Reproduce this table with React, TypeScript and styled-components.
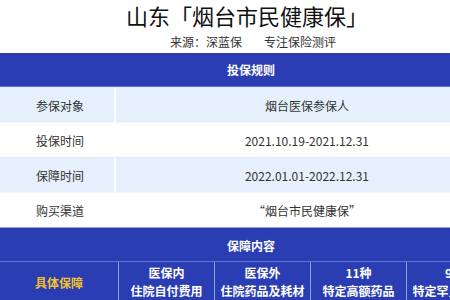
import React from 'react'
import styled, { createGlobalStyle } from 'styled-components'

const Global = createGlobalStyle`
  *, *::before, *::after {
    box-sizing: border-box;
  }
  html, body {
    margin: 0;
    padding: 0;
    background: #fff;
    overflow: hidden;
  }
  body {
    font-family: "Noto Sans CJK SC", "Noto Sans", sans-serif;
    color: #333;
  }
`

const rules = [
  { label: '参保对象', value: '烟台医保参保人' },
  { label: '投保时间', value: '2021.10.19-2021.12.31' },
  { label: '保障时间', value: '2022.01.01-2022.12.31' },
  { label: '购买渠道', value: '“烟台市民健康保”' },
]

const cover = [
  ['医保内', '住院自付费用'],
  ['医保外', '住院药品及耗材费用'],
  ['11种', '特定高额药品'],
  ['9种', '特定罕见病药品'],
]

export default function App() {
  return (
    <Page>
      <Global />
      <Title>山东「烟台市民健康保」</Title>
      <Sub>
        <span>来源：深蓝保</span>
        <span>专注保险测评</span>
      </Sub>
      <Section>
        <Head>投保规则</Head>
        {rules.map((r, i) => (
          <Row key={r.label} shaded={i % 2 === 0}>
            <Label>{r.label}</Label>
            <Value>{r.value}</Value>
          </Row>
        ))}
      </Section>
      <Section>
        <Head second>保障内容</Head>
        <CoverRow>
          <Gold>具体保障</Gold>
          {cover.map(([a, b]) => (
            <CoverCell key={a}>
              <div>{a}</div>
              <div>{b}</div>
            </CoverCell>
          ))}
        </CoverRow>
      </Section>
    </Page>
  )
}

const Page = styled.div`
  width: 502px;
`

const Title = styled.h1`
  margin: 0;
  font-size: 22px;
  font-weight: 400;
  line-height: 30px;
  text-align: center;
  color: #111;
  padding-right: 8px;
`

const Sub = styled.div`
  display: flex;
  justify-content: center;
  gap: 22px;
  margin: 2px 0 1px;
  font-size: 12px;
  line-height: 20px;
  color: #333;
  padding-left: 4px;
`

const Section = styled.div`
  display: flex;
  flex-direction: column;
`

const Head = styled.div<{ second?: boolean }>`
  height: ${(p) => (p.second ? '35px' : '34px')};
  line-height: ${(p) => (p.second ? '35px' : '34px')};
  background: #2a3db3;
  color: #fff;
  font-size: 12px;
  font-weight: 700;
  text-align: center;
  border-top: ${(p) => (p.second ? '1px solid #8fa2e6' : 'none')};
  border-bottom: 1px solid #5c74d6;
`

const Row = styled.div<{ shaded: boolean }>`
  display: grid;
  grid-template-columns: 116px 1fr;
  height: 35px;
  align-items: center;
  font-size: 12px;
  background: ${(p) => (p.shaded ? '#e6f0fd' : '#fff')};
  border-top: 1px solid ${(p) => (p.shaded ? '#dde9fb' : '#f4f8fe')};
`

const Label = styled.div`
  height: 100%;
  display: flex;
  align-items: center;
  padding-left: 36px;
  border-right: 2px solid rgba(255, 255, 255, 0.7);
`

const Value = styled.div`
  text-align: center;
  padding-right: 4px;
`

const CoverRow = styled.div`
  display: grid;
  grid-template-columns: 118px repeat(4, 96px);
  align-items: stretch;
  background: #2a3db3;
  height: 60px;
`

const Gold = styled.div`
  padding-top: 12px;
  line-height: 18px;
  font-size: 12px;
  font-weight: 700;
  color: #f2c12e;
  text-align: center;
`

const CoverCell = styled.div`
  border-left: 1px solid #8fa2e6;
  padding: 2px 4px 0;
  line-height: 18px;
  font-size: 12px;
  font-weight: 700;
  color: #fff;
  text-align: center;
`
